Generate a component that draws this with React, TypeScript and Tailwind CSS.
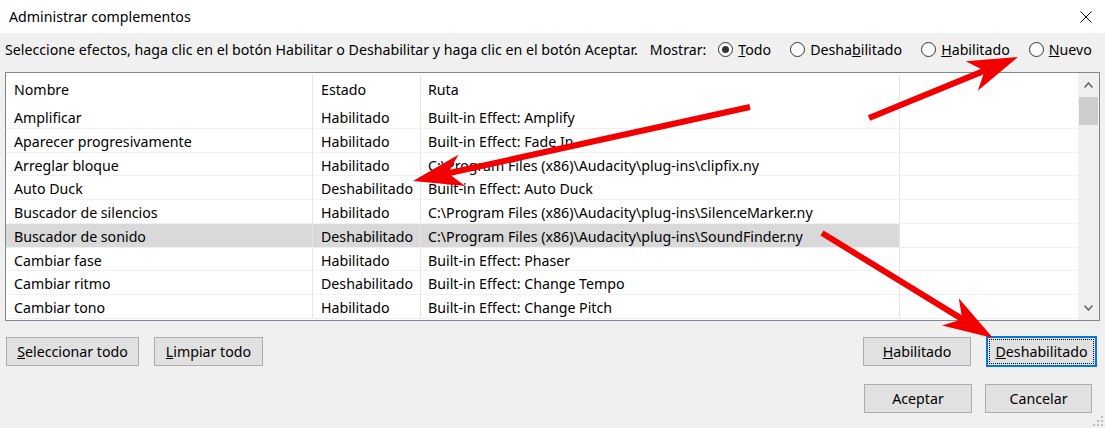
import React from "react";

const rows = [
  ["Amplificar", "Habilitado", "Built-in Effect: Amplify"],
  ["Aparecer progresivamente", "Habilitado", "Built-in Effect: Fade In"],
  ["Arreglar bloque", "Habilitado", "C:\\Program Files (x86)\\Audacity\\plug-ins\\clipfix.ny"],
  ["Auto Duck", "Deshabilitado", "Built-in Effect: Auto Duck"],
  ["Buscador de silencios", "Habilitado", "C:\\Program Files (x86)\\Audacity\\plug-ins\\SilenceMarker.ny"],
  ["Buscador de sonido", "Deshabilitado", "C:\\Program Files (x86)\\Audacity\\plug-ins\\SoundFinder.ny"],
  ["Cambiar fase", "Habilitado", "Built-in Effect: Phaser"],
  ["Cambiar ritmo", "Deshabilitado", "Built-in Effect: Change Tempo"],
  ["Cambiar tono", "Habilitado", "Built-in Effect: Change Pitch"],
];

const Radio = ({ checked, children }: { checked?: boolean; children: React.ReactNode }) => (
  <label className="flex items-center gap-[5px]">
    <span className="w-[15px] h-[15px] rounded-full border border-[#333] bg-white flex items-center justify-center">
      {checked && <span className="w-[7px] h-[7px] rounded-full bg-[#333]"></span>}
    </span>
    <span>{children}</span>
  </label>
);

const Btn = ({ className, children, focused }: { className: string; children: React.ReactNode; focused?: boolean }) => (
  <button
    className={
      "relative flex items-center justify-center bg-[#e1e1e1] text-black " +
      (focused ? "border-2 border-[#0078d7] " : "border border-[#adadad] ") +
      className
    }
  >
    {focused && <span className="absolute inset-[1px] border border-dotted border-black"></span>}
    <span>{children}</span>
  </button>
);

function Arrow({ x1, y1, x2, y2 }: { x1: number; y1: number; x2: number; y2: number }) {
  const L = 50;
  const W = 16;
  const dx = x2 - x1;
  const dy = y2 - y1;
  const len = Math.hypot(dx, dy);
  const ux = dx / len;
  const uy = dy / len;
  const nx = -uy;
  const ny = ux;
  const bx = x2 - ux * L;
  const by = y2 - uy * L;
  const mx = x2 - ux * L * 0.72;
  const my = y2 - uy * L * 0.72;
  const pts = [
    [x2, y2],
    [bx + nx * W, by + ny * W],
    [mx, my],
    [bx - nx * W, by - ny * W],
  ]
    .map((p) => p.join(","))
    .join(" ");
  return (
    <g>
      <line x1={x1} y1={y1} x2={mx} y2={my} stroke="#f20000" strokeWidth={6} />
      <polygon points={pts} fill="#f20000" />
    </g>
  );
}

export default function App() {
  return (
    <div className="relative w-[1105px] h-[428px] overflow-hidden bg-[#f0f0f0] font-['Noto_Sans',sans-serif] text-[14.2px] text-black">
      {/* title bar */}
      <div className="h-[33px] bg-white flex items-center justify-between">
        <span className="ml-[9px]">Administrar complementos</span>
        <svg width="12" height="12" viewBox="0 0 12 12" className="mr-[13px]">
          <path d="M0.5 0.5 L11.5 11.5 M11.5 0.5 L0.5 11.5" stroke="#000" strokeWidth="1" />
        </svg>
      </div>

      {/* instructions + filter */}
      <div className="h-[33px] flex items-center pl-[5px]">
        <span>
          Seleccione efectos, haga clic en el botón Habilitar o Deshabilitar y haga clic en el botón Aceptar.
        </span>
        <span className="ml-[12px]">Mostrar:</span>
        <div className="ml-[12px] flex items-center gap-[19px]">
          <Radio checked>
            <u>T</u>odo
          </Radio>
          <Radio>
            Desha<u>b</u>ilitado
          </Radio>
          <Radio>
            <u>H</u>abilitado
          </Radio>
          <Radio>
            <u>N</u>uevo
          </Radio>
        </div>
      </div>

      {/* list */}
      <div className="mt-[6px] mx-[5px] h-[249px] border border-[#828790] bg-white flex overflow-hidden">
        <div className="flex-1 flex flex-col">
          <div className="h-[32px] flex shrink-0 pt-[1px]">
            <div className="w-[307px] border-r border-[#e5e5e5] pl-2 flex items-center">Nombre</div>
            <div className="w-[108px] border-r border-[#e5e5e5] pl-2 flex items-center">Estado</div>
            <div className="w-[479px] border-r border-[#e5e5e5] pl-[7px] flex items-center">Ruta</div>
            <div className="flex-1"></div>
          </div>
          {rows.map((r, i) => {
            const sel = i === 5;
            const bg = sel ? " bg-[#d9d9d9]" : "";
            return (
              <div key={i} className="h-[23.75px] flex shrink-0 border-b border-[#f0f0f0]">
                <div className={"w-[307px] border-r border-[#e5e5e5] pl-2 flex items-center pt-[3px] whitespace-nowrap" + bg}>
                  {r[0]}
                </div>
                <div className={"w-[108px] border-r border-[#e5e5e5] pl-2 flex items-center pt-[3px] whitespace-nowrap" + bg}>
                  {r[1]}
                </div>
                <div className={"w-[479px] border-r border-[#e5e5e5] pl-[7px] flex items-center pt-[3px] whitespace-nowrap" + bg}>
                  {r[2]}
                </div>
                <div className="flex-1"></div>
              </div>
            );
          })}
        </div>
        {/* scrollbar */}
        <div className="w-[21px] bg-[#f0f0f0] flex flex-col items-center shrink-0">
          <div className="h-[24px] flex items-center justify-center">
            <svg width="9" height="6" viewBox="0 0 9 6">
              <path d="M0.5 5.5 L4.5 1 L8.5 5.5" fill="none" stroke="#606060" strokeWidth="1.5" />
            </svg>
          </div>
          <div className="w-[19px] h-[28px] bg-[#cdcdcd]"></div>
          <div className="flex-1"></div>
          <div className="h-[24px] flex items-center justify-center">
            <svg width="9" height="6" viewBox="0 0 9 6">
              <path d="M0.5 0.5 L4.5 5 L8.5 0.5" fill="none" stroke="#606060" strokeWidth="1.5" />
            </svg>
          </div>
        </div>
      </div>

      {/* buttons row 1 */}
      <div className="mt-[15px] h-[31px] flex items-center justify-between">
        <div className="ml-[6px] flex gap-[15px]">
          <Btn className="w-[133px] h-[29px]">
            <u>S</u>eleccionar todo
          </Btn>
          <Btn className="w-[109px] h-[29px]">
            <u>L</u>impiar todo
          </Btn>
        </div>
        <div className="mr-[8px] flex items-center gap-[15px]">
          <Btn className="w-[108px] h-[29px]">
            <u>H</u>abilitado
          </Btn>
          <Btn className="w-[111px] h-[31px]" focused>
            <u>D</u>eshabilitado
          </Btn>
        </div>
      </div>

      {/* buttons row 2 */}
      <div className="mt-[17px] flex justify-end gap-[13px] mr-[13px]">
        <Btn className="w-[108px] h-[29px]">Aceptar</Btn>
        <Btn className="w-[107px] h-[29px]">Cancelar</Btn>
      </div>

      {/* resize grip */}
      <svg className="absolute right-0 bottom-0" width="14" height="14" viewBox="0 0 14 14">
        {[
          [10, 2],
          [10, 6],
          [6, 6],
          [10, 10],
          [6, 10],
          [2, 10],
        ].map(([x, y], i) => (
          <rect key={i} x={x} y={y} width="2" height="2" fill="#bcbcbc" />
        ))}
      </svg>

      {/* annotation arrows */}
      <svg className="absolute inset-0 pointer-events-none" width="1105" height="428">
        <Arrow x1={869} y1={118} x2={1018} y2={57} />
        <Arrow x1={750} y1={107} x2={413} y2={181} />
        <Arrow x1={822} y1={233} x2={993} y2={338} />
      </svg>
    </div>
  );
}
